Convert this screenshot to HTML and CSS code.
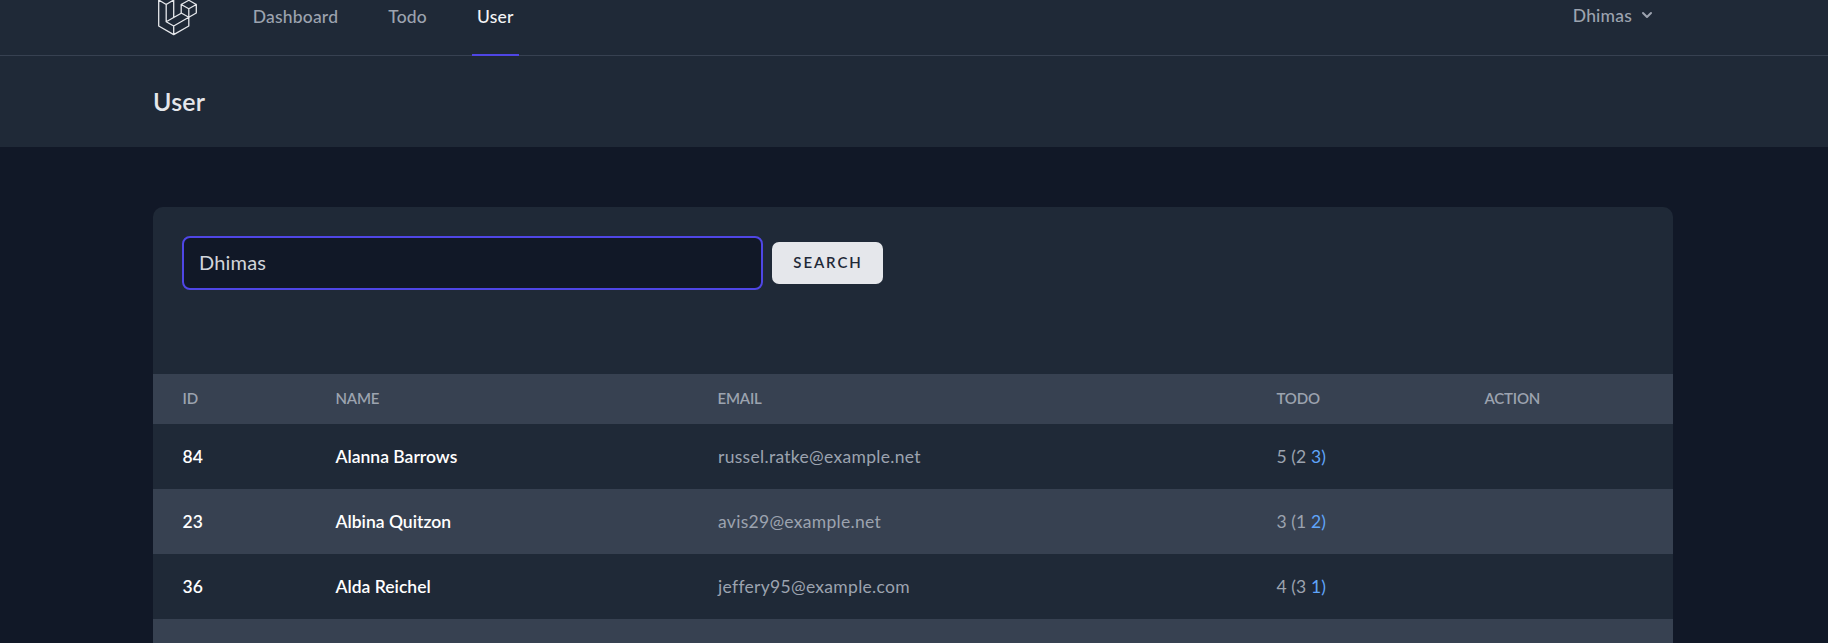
FILE: index.html
```html
<!DOCTYPE html>
<html lang="en">
<head>
<meta charset="utf-8">
<title>User</title>
<link rel="stylesheet" href="styles.css">
</head>
<body>
<nav class="nav">
  <div class="container nav-inner">
    <svg class="logo" viewBox="0 0 46 36" fill="none" stroke="#e5e7eb" stroke-width="1.3" stroke-linejoin="round" stroke-linecap="round">
      <path d="M5.7-1V26L20.7 34.6 35.8 26V17.3L20.7 26V34.6M5.7 0 13.2 4.5 20.7 0V17.3M13.2 4.5V21.7L20.7 26M13.2 21.7 28.2 13.2"/>
      <path d="M28.2 4.5 35.8 .3 43.3 4.5V13L35.8 17.3 28.2 13V4.5L35.8 8.8 43.3 4.5M35.8 8.8V17.3"/>
    </svg>
    <div class="links">
      <a class="link">Dashboard</a>
      <a class="link">Todo</a>
      <a class="link active">User</a>
    </div>
    <div class="account">
      <span>Dhimas</span>
      <svg class="chevron" viewBox="0 0 20 20" fill="currentColor"><path fill-rule="evenodd" d="M5.293 7.293a1 1 0 011.414 0L10 10.586l3.293-3.293a1 1 0 111.414 1.414l-4 4a1 1 0 01-1.414 0l-4-4a1 1 0 010-1.414z"/></svg>
    </div>
  </div>
</nav>
<header class="page-header">
  <div class="container"><h2 class="title">User</h2></div>
</header>
<main class="container card">
  <form class="search">
    <input class="field" type="text" value="Dhimas">
    <button class="button" type="button">SEARCH</button>
  </form>
  <table class="table">
    <colgroup><col class="c-id"><col class="c-name"><col class="c-email"><col class="c-todo"><col></colgroup>
    <thead><tr><th>ID</th><th>NAME</th><th>EMAIL</th><th>TODO</th><th>ACTION</th></tr></thead>
    <tbody>
      <tr><td class="strong">84</td><td class="strong">Alanna Barrows</td><td>russel.ratke@example.net</td><td class="count">5 (2 <span class="blue">3)</span></td><td></td></tr>
      <tr><td class="strong">23</td><td class="strong">Albina Quitzon</td><td>avis29@example.net</td><td class="count">3 (1 <span class="blue">2)</span></td><td></td></tr>
      <tr><td class="strong">36</td><td class="strong">Alda Reichel</td><td>jeffery95@example.com</td><td class="count">4 (3 <span class="blue">1)</span></td><td></td></tr>
    </tbody>
  </table>
</main>
</body>
</html>
```
FILE: styles.css
```css
* { box-sizing: border-box; }
body {
  margin: 0;
  height: 643px;
  overflow: hidden;
  background: #111827;
  color: #9ca3af;
  font-family: Lato, "Open Sans", sans-serif;
  font-size: 17.5px;
}
.container { width: 1520px; margin-left: 153px; }
.nav { height: 56px; background: #1f2937; border-bottom: 1px solid #374151; }
.nav-inner { display: flex; height: 56px; }
.logo { width: 46px; height: 36px; }
.links { display: flex; gap: 40px; margin-left: 48.7px; }
.link {
  height: 56px;
  padding: 0 5px;
  border-bottom: 2px solid transparent;
  font-weight: 500;
  line-height: 34px;
  letter-spacing: 0.2px;
}
.link.active { color: #f3f4f6; border-color: #4f46e5; }
.account {
  display: flex;
  align-items: center;
  gap: 5px;
  height: 30px;
  margin-left: auto;
  margin-right: 16px;
  font-weight: 500;
  letter-spacing: 0.2px;
}
.chevron { width: 20px; height: 20px; }
.page-header { height: 91px; padding-top: 29px; background: #1f2937; }
.title {
  margin: 0;
  color: #e5e7eb;
  font-size: 25px;
  font-weight: 600;
  line-height: 32px;
  letter-spacing: 0.2px;
}
.card {
  margin-top: 60px;
  height: 436px;
  overflow: hidden;
  border-radius: 10px 10px 0 0;
  /* the next striped row continues below the last visible one */
  background: linear-gradient(#1f2937 412px, #374151 412px);
}
.search {
  display: flex;
  align-items: center;
  gap: 9px;
  height: 167px;
  padding: 29px 29px 84px;
}
.field {
  width: 581px;
  height: 54px;
  padding: 0 15px 2px;
  border: 2px solid #4f46e5;
  border-radius: 8px;
  outline: none;
  background: #111827;
  color: #d1d5db;
  font: 400 20px/30px Lato, sans-serif;
  letter-spacing: 0.2px;
}
.button {
  width: 111px;
  height: 42px;
  padding: 0 0 2px 1px;
  border: 0;
  border-radius: 7px;
  background: #e5e7eb;
  color: #1f2937;
  font: 600 15px/20px Lato, sans-serif;
  letter-spacing: 1.9px;
}
.table { width: 100%; border-collapse: collapse; table-layout: fixed; }
.c-id { width: 153px; }
.c-name { width: 382px; }
.c-email { width: 559px; }
.c-todo { width: 208px; }
.table th {
  height: 50px;
  padding: 0 29.5px 3px;
  background: #374151;
  font-size: 15px;
  font-weight: 600;
  letter-spacing: -0.2px;
  text-align: left;
}
.table td { height: 65px; padding: 0 30px; letter-spacing: 0.3px; }
.table tbody tr { background: #1f2937; }
.table tbody tr:nth-child(even) { background: #374151; }
.table .strong { padding-left: 29.5px; color: #fff; font-weight: 600; letter-spacing: 0; }
.table .count { padding-left: 29.5px; letter-spacing: 0.1px; }
.blue { color: #60a5fa; }
```
